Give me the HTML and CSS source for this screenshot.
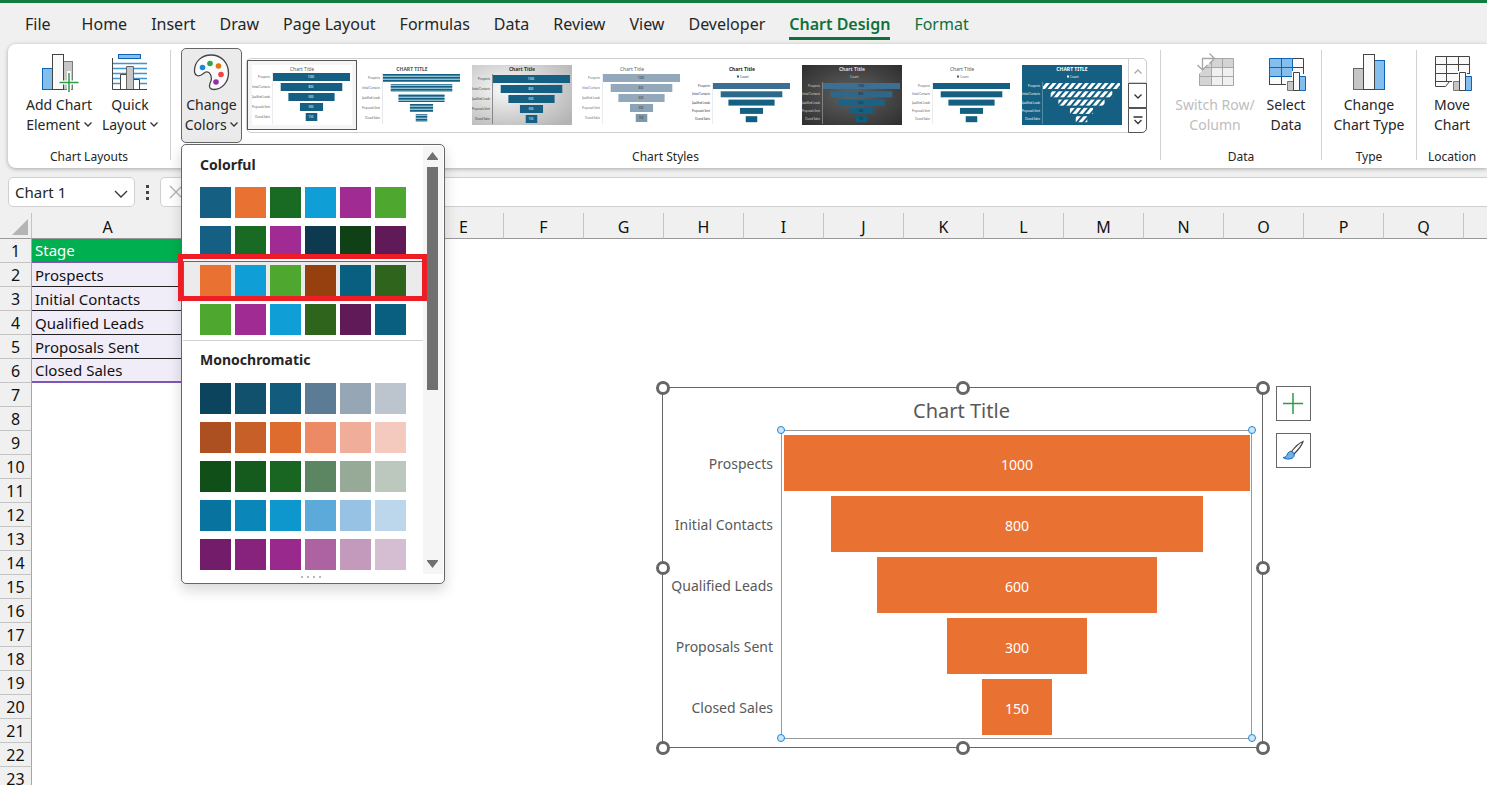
FILE: index.html
```html
<!DOCTYPE html>
<html lang="en">
<head>
    <meta charset="UTF-8">
    <meta name="viewport" content="width=device-width, initial-scale=1.0">
    <title>Funnel chart - Excel</title>
    <link rel="stylesheet" href="styles.css">
</head>
<body>
    <nav class="tabs">
        <a class="file" href="#">File</a>
        <a href="#">Home</a>
        <a href="#">Insert</a>
        <a href="#">Draw</a>
        <a href="#">Page Layout</a>
        <a href="#">Formulas</a>
        <a href="#">Data</a>
        <a href="#">Review</a>
        <a href="#">View</a>
        <a href="#">Developer</a>
        <a class="context active" href="#">Chart Design</a>
        <a class="context" href="#">Format</a>
    </nav>

    <div class="ribbon">
        <section class="group layouts">
            <div class="tools">
                <button class="tool wide">
                    <svg width="40" height="40" viewBox="0 0 40 40">
                        <rect x="24.5" y="8.5" width="9" height="28" fill="#c8c6c4" stroke="#7a7a7a"/>
                        <rect x="3.5" y="15.5" width="10" height="21" fill="#83beec" stroke="#0f63b4"/>
                        <rect x="13.5" y="1.5" width="11" height="35" fill="#fafafa" stroke="#444"/>
                        <path d="M30 18v20M20 29.500h20" stroke="#fff" stroke-width="4"/>
                        <path d="M30 20v19M20.500 29.500h19" stroke="#2a9d48" stroke-width="1.500"/>
                    </svg>
                    <span>Add Chart<br>Element <svg class="caret" width="8" height="5" viewBox="0 0 8 5"><path d="M.5.500 4 4 7.500.500"/></svg></span>
                </button>
                <button class="tool">
                    <svg width="40" height="40" viewBox="0 0 40 40">
                        <path d="M3 10.500h34M3 15.500h34M3 20.500h34M3 25.500h34M3 30.500h34" stroke="#3c95d4" stroke-width="1.500"/>
                        <rect x="8.500" y="1.500" width="22" height="4" fill="#83beec" stroke="#0f63b4"/>
                        <path d="M10.500 36V21.500h6V36M23.500 36V26.500h6V36" fill="#fff" stroke="#444"/>
                        <path d="M16.500 36V13.500h7V36" fill="#c8c6c4" stroke="#666"/>
                        <path d="M2.500 5v31.500H37" fill="none" stroke="#444"/>
                    </svg>
                    <span>Quick<br>Layout <svg class="caret" width="8" height="5" viewBox="0 0 8 5"><path d="M.5.500 4 4 7.500.500"/></svg></span>
                </button>
            </div>
            <h2>Chart Layouts</h2>
        </section>

        <section class="group styles">
            <div class="tools">
                <div class="colors">
                    <button class="tool pressed" aria-expanded="true">
                        <svg width="40" height="40" viewBox="0 0 40 40">
                            <path d="M2.500 17C3 8 10 2 19 2c10 0 17.500 7.500 17.500 18C36.500 29 30 36.500 22 36.500c-4 0-5.500-2.500-4-6 1.500-3 2-6 .5-9-2-3.500-5-3-7-1C9 22.500 7 23.500 5 22.500c-2-1-2.700-3-2.500-5.500z" fill="#fafafa" stroke="#444" stroke-width="1.300"/>
                            <circle cx="10.500" cy="14.500" r="2.800" fill="#1e88d8"/>
                            <circle cx="18" cy="10.500" r="2.800" fill="#2fa34a"/>
                            <circle cx="26.500" cy="13" r="2.800" fill="#e07612"/>
                            <circle cx="29" cy="21.500" r="2.800" fill="#ee4444"/>
                            <circle cx="24" cy="29" r="2.800" fill="#9331a4"/>
                        </svg>
                        <span>Change<br>Colors <svg class="caret" width="8" height="5" viewBox="0 0 8 5"><path d="M.5.500 4 4 7.500.500"/></svg></span>
                    </button>
                    <div class="menu">
                        <div class="menu-body">
                            <div class="palettes">
                                <h3>Colorful</h3>
                                <div id="colorful"></div>
                                <h3 class="mono">Monochromatic</h3>
                                <div id="monochromatic"></div>
                            </div>
                            <div class="scroll">
                                <svg width="11" height="8" viewBox="0 0 11 8"><path d="M5.500 0 11 7v1H0V7z"/></svg>
                                <div class="thumb"></div>
                                <svg class="down" width="11" height="8" viewBox="0 0 11 8"><path d="M5.500 8 11 1V0H0v1z"/></svg>
                            </div>
                        </div>
                        <div class="grip"><i></i><i></i><i></i><i></i></div>
                    </div>
                </div>
                <div class="gallery">
                    <div class="thumbs" id="thumbs"></div>
                    <div class="gallery-nav">
                        <button disabled aria-label="Previous styles"><svg width="8" height="5" viewBox="0 0 8 5"><path d="M.5 4.500 4 1l3.500 3.500"/></svg></button>
                        <button aria-label="Next styles"><svg width="8" height="5" viewBox="0 0 8 5"><path d="M.5.500 4 4 7.500.500"/></svg></button>
                        <button aria-label="More styles"><svg width="10" height="9" viewBox="0 0 10 9"><path d="M.5 1h9M1.500 4 5 7.500 8.500 4"/></svg></button>
                    </div>
                </div>
            </div>
            <h2>Chart Styles</h2>
        </section>

        <section class="group data">
            <div class="tools">
                <button class="tool wide" disabled>
                    <svg width="40" height="40" viewBox="0 0 40 40">
                        <path d="M4.500 5.500h34v27h-34z" fill="#f0f0f0"/>
                        <path d="M4.500 5.500h34v9h-34zM4.500 14.500h12v18h-12z" fill="#d4d4d4"/>
                        <path d="M4.500 5.500h34v27h-34zM4.500 14.500h34M4.500 23.500h34M16.500 5.500v27M27.500 5.500v27" fill="none" stroke="#a6a6a6"/>
                        <path d="M0 0h24L4 21H0z" fill="#fff"/>
                        <path d="M7.500 17V5.500H19M14.500.500l5 5-5 5M2.500 12l5 5 5-5" fill="none" stroke="#a6a6a6" stroke-width="1.300"/>
                    </svg>
                    <span>Switch Row/<br>Column</span>
                </button>
                <button class="tool">
                    <svg width="40" height="40" viewBox="0 0 40 40">
                        <path d="M3.500 5.500h34v26h-34z" fill="#fafafa"/>
                        <path d="M3.500 31.500h34v-26M15.500 23v8M3.500 23v9M26.500 5.500h11M26.500 14.500h11" fill="none" stroke="#444"/>
                        <path d="M3.500 5.500h23v18h-23zM15.500 5.500v18M3.500 14.500h23" fill="#83beec" stroke="#0f63b4"/>
                        <path d="M20 26h6v-8h9v3h5v19H20z" fill="#fff"/>
                        <path d="M21.500 28.500h6v9h-6z" fill="#c8c6c4" stroke="#777"/>
                        <path d="M33.500 23.500h6v14h-6z" fill="#83beec" stroke="#0f63b4"/>
                        <path d="M27.500 19.500h6v18h-6z" fill="#fafafa" stroke="#444"/>
                    </svg>
                    <span>Select<br>Data</span>
                </button>
            </div>
            <h2>Data</h2>
        </section>

        <section class="group type">
            <div class="tools">
                <button class="tool wide">
                    <svg width="40" height="40" viewBox="0 0 40 40">
                        <rect x="4.500" y="15.500" width="10" height="21" fill="#c8c6c4" stroke="#666"/>
                        <rect x="25.500" y="7.500" width="10" height="29" fill="#83beec" stroke="#0f63b4"/>
                        <rect x="14.500" y="1.500" width="11" height="35" fill="#fafafa" stroke="#444"/>
                    </svg>
                    <span>Change<br>Chart Type</span>
                </button>
            </div>
            <h2>Type</h2>
        </section>

        <section class="group location">
            <div class="tools">
                <button class="tool">
                    <svg width="40" height="40" viewBox="0 0 40 40">
                        <path d="M3.500 3.500h34v25H17.500l-4 5h-10z" fill="#fafafa" stroke="#444"/>
                        <path d="M3.500 11.500h34M3.500 20.500h34M3.500 28.500h15M14.500 3.500v25M26.500 3.500v25" fill="none" stroke="#444"/>
                        <path d="M20 27h6v-9h9v3h5v19H20z" fill="#fff"/>
                        <path d="M21.500 28.500h6v9h-6z" fill="#c8c6c4" stroke="#777"/>
                        <path d="M33.500 23.500h6v14h-6z" fill="#83beec" stroke="#0f63b4"/>
                        <path d="M27.500 19.500h6v18h-6z" fill="#fafafa" stroke="#444"/>
                    </svg>
                    <span>Move<br>Chart</span>
                </button>
            </div>
            <h2>Location</h2>
        </section>
    </div>

    <div class="formula-bar">
        <div class="name-box">
            <select aria-label="Name box"><option>Chart 1</option></select>
            <svg width="14" height="8" viewBox="0 0 14 8"><path d="M1 1l6 6 6-6"/></svg>
        </div>
        <div class="dots"><i></i><i></i><i></i></div>
        <div class="formula">
            <svg width="14" height="14" viewBox="0 0 14 14"><path d="M1 1l12 12M13 1 1 13"/></svg>
            <input type="text" aria-label="Formula">
        </div>
    </div>

    <main class="sheet">
        <table>
            <colgroup id="cols"></colgroup>
            <thead><tr id="letters"></tr></thead>
            <tbody id="rows"></tbody>
        </table>

        <div class="chart">
            <div class="chart-title">Chart Title</div>
            <div class="chart-body">
                <div class="labels">
                    <span>Prospects</span>
                    <span>Initial Contacts</span>
                    <span>Qualified Leads</span>
                    <span>Proposals Sent</span>
                    <span>Closed Sales</span>
                </div>
                <div class="plot">
                    <div id="bars"></div>
                    <i class="dot tl"></i><i class="dot tr"></i><i class="dot bl"></i><i class="dot br"></i>
                </div>
            </div>
            <i class="handle t l"></i><i class="handle t c"></i><i class="handle t r"></i>
            <i class="handle m l"></i><i class="handle m r"></i>
            <i class="handle b l"></i><i class="handle b c"></i><i class="handle b r"></i>
            <div class="side">
                <button aria-label="Chart elements">
                    <svg width="22" height="22" viewBox="0 0 22 22"><path d="M10 0v21M0 10.500h20" stroke="#2a9d48" stroke-width="1.500"/></svg>
                </button>
                <button aria-label="Chart styles">
                    <svg width="22" height="22" viewBox="0 0 22 22">
                        <path d="M8.500 11.500C12 7 16 3 20 1.500 19 5.500 15 10 11 14z" fill="#fafafa" stroke="#444" stroke-width="1.200"/>
                        <path d="M0 17.500c3 0 3.500-1.500 4.500-3.500 1.500-3 3.500-3.500 5.500-1.500 2 2 1.500 4-.5 5.500-3 1.500-6.500 1.500-9.500-.5z" fill="#6db1e8" stroke="#0f63b4"/>
                    </svg>
                </button>
            </div>
        </div>
    </main>

    <script src="script.js"></script>
</body>
</html>
```

FILE: styles.css
```css
* {
    box-sizing: border-box;
}

body {
    margin: 0;
    height: 100vh;
    display: flex;
    flex-direction: column;
    overflow: hidden;
    background: #f0f0f0;
    color: #262626;
    font-family: "Noto Sans", "Open Sans", sans-serif;
    border-top: 3px solid #107c41;
}

button, select, input {
    font: inherit;
    color: inherit;
}

h2, h3 {
    margin: 0;
}

/* tabs */
.tabs {
    display: flex;
    gap: 24px;
    height: 41px;
    padding-left: 25px;
    font-size: 16px;
    line-height: 22px;
    flex: none;
}

.tabs a {
    height: 37px;
    padding-top: 10px;
    color: #262626;
    text-decoration: none;
    white-space: nowrap;
}

.tabs .file {
    margin-right: 7px;
}

.tabs .context {
    color: #0f703b;
}

.tabs .active {
    font-weight: 600;
    border-bottom: 3px solid #0f703b;
}

/* ribbon */
.ribbon {
    display: flex;
    flex: none;
    height: 124px;
    margin-left: 8px;
    background: #fff;
    border-radius: 8px 0 0 8px;
    box-shadow: 0 1px 4px rgba(0, 0, 0, 0.3);
    position: relative;
    z-index: 5;
}

.group {
    display: flex;
    flex-direction: column;
    margin: 6px 0 8px;
    border-right: 1px solid #d2d2d2;
}

.group h2 {
    margin-top: 3px;
    font-size: 12px;
    line-height: 20px;
    font-weight: normal;
    text-align: center;
}

.tools {
    display: flex;
    justify-content: center;
    height: 94px;
    flex: none;
}

.layouts {
    width: 163px;
}

.styles {
    flex: 1;
}

.styles .tools {
    justify-content: flex-start;
    padding-left: 10px;
}

.data {
    width: 161px;
}

.data .tools {
    padding-left: 8px;
}

.type {
    width: 95px;
}

.location {
    width: 70px;
    border-right: 0;
}

.tool {
    display: flex;
    flex-direction: column;
    align-items: center;
    width: 60px;
    height: 95px;
    padding: 2px 0 0;
    border: 1px solid transparent;
    border-radius: 5px;
    background: none;
    font-size: 14px;
    line-height: 20px;
    white-space: nowrap;
}

.tool.wide {
    width: 82px;
}

.tool span {
    margin-top: 2px;
}

.tool:disabled {
    color: #bdbdbd;
}

.caret {
    vertical-align: 3px;
}

.caret path, .gallery-nav path, .name-box path, .formula path {
    fill: none;
    stroke: #333;
    stroke-width: 1.3;
}

.colors {
    position: relative;
    margin-top: -2px;
}

.pressed {
    width: 61px;
    padding-top: 4px;
    background: #ebebeb;
    border-color: #666;
}

/* color menu */
.menu {
    position: absolute;
    left: 0;
    top: 96px;
    width: 264px;
    padding: 1px 1px 0;
    background: #fff;
    border: 1px solid #666;
    border-radius: 5px;
    box-shadow: 0 6px 14px rgba(0, 0, 0, 0.16);
}

.menu-body {
    display: flex;
}

.palettes {
    flex: 1;
}

.menu h3 {
    padding-left: 17px;
    font-size: 14px;
    line-height: 37px;
}

.menu .mono {
    margin-top: 1px;
    border-top: 1px solid #d2d2d2;
    line-height: 38px;
}

.palette {
    position: relative;
    display: flex;
    gap: 4px;
    width: 100%;
    height: 39px;
    padding: 3px 16px;
    border: 1px solid transparent;
    background: none;
}

.palette i {
    width: 31px;
    height: 31px;
}

.palette.hover {
    background: #ebebeb;
    border-color: #666;
}

/* red callout around the chosen palette */
.palette.hover::after {
    content: "";
    position: absolute;
    inset: -8px -5px -2px -6px;
    border: 5px solid #ee1c25;
}

.scroll {
    display: flex;
    flex-direction: column;
    align-items: center;
    width: 22px;
    padding: 6px 1px 6px 0;
    background: #f5f5f5;
    fill: #707070;
}

.scroll .thumb {
    width: 11px;
    height: 223px;
    margin-top: 7px;
    background: #707070;
}

.scroll .down {
    margin-top: auto;
}

.grip {
    display: flex;
    justify-content: center;
    gap: 4px;
    height: 9px;
    padding: 2px 4px 0 0;
}

.grip i {
    width: 2px;
    height: 2px;
    background: #b4bccb;
}

/* chart style gallery */
.gallery {
    display: flex;
    height: 75px;
    margin: 8px 0 0 4px;
    border: 1px solid #cfcfcf;
    border-radius: 5px;
}

.thumbs {
    display: flex;
}

.thumbs button {
    width: 110px;
    height: 70px;
    margin-top: 1px;
    padding: 0 4px;
    border: 1px solid transparent;
    background: none;
    line-height: 0;
}

.thumbs .selected {
    border: 1px solid #555;
    background: #f5f5f5;
}

.gallery-nav {
    display: flex;
    flex-direction: column;
    width: 19px;
    margin: -1px -1px -1px 1px;
}

.gallery-nav button {
    flex: 1;
    padding: 0;
    border: 1px solid #555;
    background: #fff;
    line-height: 0;
}

.gallery-nav button:first-child {
    border-color: #cfcfcf;
    border-radius: 0 5px 0 0;
}

.gallery-nav button:last-child {
    border-radius: 0 0 5px 0;
}

.gallery-nav button:disabled path {
    stroke: #aaa;
}

/* formula bar */
.formula-bar {
    display: flex;
    flex: none;
    height: 45px;
    padding: 9px 0 6px 8px;
}

.name-box, .formula {
    background: #fff;
    border: 1px solid #cfcfcf;
    border-radius: 5px;
}

.name-box {
    position: relative;
    width: 127px;
}

.name-box select {
    width: 100%;
    height: 28px;
    padding: 0 6px;
    border: 0;
    background: none;
    appearance: none;
    font-size: 15px;
}

.name-box svg {
    position: absolute;
    right: 6px;
    top: 12px;
    pointer-events: none;
}

.dots {
    display: flex;
    flex-direction: column;
    justify-content: center;
    gap: 3px;
    width: 25px;
    align-items: center;
}

.dots i {
    width: 3px;
    height: 3px;
    background: #444;
}

.formula {
    display: flex;
    align-items: center;
    flex: 1;
    padding-left: 8px;
    border-right: 0;
    border-radius: 5px 0 0 5px;
}

.formula path {
    stroke: #b0b0b0;
}

.formula input {
    flex: 1;
    border: 0;
    outline: 0;
    background: none;
}

/* sheet */
.sheet {
    position: relative;
    flex: 1;
    overflow: hidden;
    background: #fff;
}

.sheet table {
    table-layout: fixed;
    width: 0;
    border-spacing: 0;
    font-size: 15px;
    line-height: 20px;
}

.sheet th {
    padding: 0;
    background: #f0f0f0;
    color: #111;
    font-size: 16px;
    font-weight: normal;
    border-right: 1px solid #a6a6a6;
    border-bottom: 1px solid #c4c4c4;
}

.sheet thead th {
    height: 26px;
    padding-top: 2px;
    border-right-color: #c4c4c4;
    border-bottom-color: #999;
}

.sheet tbody tr {
    height: 24px;
}

.sheet td {
    padding: 0 0 0 3px;
    white-space: nowrap;
}

.corner svg {
    display: block;
    margin-left: auto;
    margin-right: 3px;
    fill: #b4b4b4;
}

.sheet .head {
    background: #00b050;
    color: #fff;
    border-bottom: 2px solid #7f56b8;
}

.sheet .item {
    background: #f1edf8;
    color: #111;
    border-bottom: 1px solid #222;
}

.sheet .last {
    border-bottom: 2px solid #7f56b8;
}

/* chart */
.chart {
    position: absolute;
    left: 662px;
    top: 174px;
    width: 601px;
    height: 361px;
    padding: 8px 10px 8px 8px;
    background: #fff;
    border: 1px solid #666;
    color: #595959;
}

.chart-title {
    font-size: 20px;
    line-height: 30px;
    text-align: center;
    margin-bottom: 4px;
}

.chart-body {
    display: flex;
    height: 309px;
}

.labels {
    display: flex;
    flex-direction: column;
    gap: 5px;
    width: 110px;
    padding: 4px 8px 0 0;
    font-size: 14px;
    line-height: 60px;
    text-align: right;
    white-space: nowrap;
}

.labels span {
    height: 56px;
}

.plot {
    position: relative;
    flex: 1;
    padding: 4px 1px 0 2px;
    border: 1px solid #999;
}

#bars {
    display: flex;
    flex-direction: column;
    align-items: center;
    gap: 5px;
}

.bar {
    height: 56px;
    background: #e97132;
    color: #fff;
    font-size: 14px;
    line-height: 60px;
    text-align: center;
}

.handle {
    position: absolute;
    width: 14px;
    height: 14px;
    background: #fff;
    border: 3px solid #666;
    border-radius: 50%;
}

.handle.t { top: -7px; }
.handle.m { top: calc(50% - 7px); }
.handle.b { bottom: -8px; }
.handle.l { left: -7px; }
.handle.c { left: calc(50% - 7px); }
.handle.r { right: -8px; }

.dot {
    position: absolute;
    width: 8px;
    height: 8px;
    background: #cfe6fa;
    border: 1px solid #1e88d8;
    border-radius: 50%;
}

.dot.tl, .dot.tr { top: -5px; }
.dot.bl, .dot.br { bottom: -4px; }
.dot.tl, .dot.bl { left: -5px; }
.dot.tr, .dot.br { right: -5px; }

.side {
    position: absolute;
    left: calc(100% + 14px);
    top: -2px;
    display: flex;
    flex-direction: column;
    gap: 12px;
}

.side button {
    width: 35px;
    height: 35px;
    padding: 0;
    border: 1px solid #666;
    background: #fff;
    line-height: 0;
}
```

FILE: script.js
```js
// COLOR MENU
const colorful = [
    ["#156082", "#e97132", "#196b24", "#0f9ed5", "#a02b93", "#4ea72e"],
    ["#156082", "#196b24", "#a02b93", "#0d3a4e", "#0f4016", "#601a58"],
    ["#e97132", "#0f9ed5", "#4ea72e", "#964010", "#095f80", "#2f641c"],
    ["#4ea72e", "#a02b93", "#0f9ed5", "#2f641c", "#601a58", "#095f80"]
];
const monochromatic = [
    ["#0c445e", "#11516d", "#135b7c", "#5c7c96", "#96a6b5", "#bcc4ce"],
    ["#ac5022", "#c75f28", "#de6c2f", "#ec8a66", "#f0ad9a", "#f4c9be"],
    ["#104f17", "#155b1e", "#186622", "#5c8561", "#96aa97", "#bcc7be"],
    ["#07739e", "#0b86b8", "#0e97cd", "#5baada", "#97c2e4", "#bcd6ec"],
    ["#731d6a", "#87237c", "#99298d", "#ad62a1", "#c39abb", "#d5bed2"]
];

function fillPalettes(id, list, hover) {
    document.getElementById(id).innerHTML = list.map((colors, n) =>
        `<button class="palette${n === hover ? " hover" : ""}" aria-label="Palette ${n + 1}">` +
        colors.map(c => `<i style="background: ${c}"></i>`).join("") + "</button>"
    ).join("");
}
fillPalettes("colorful", colorful, 2);
fillPalettes("monochromatic", monochromatic, -1);

// GALLERY THUMBNAILS
const stages = ["Prospects", "Initial Contacts", "Qualified Leads", "Proposals Sent", "Closed Sales"];
const values = [1000, 800, 600, 300, 150];
const defs = `<defs>
    <pattern id="lines" width="4" height="3" patternUnits="userSpaceOnUse"><rect width="4" height="3" fill="#8fc0d4"/><rect width="4" height="1.600" fill="#156082"/></pattern>
    <pattern id="hatch" width="5" height="5" patternUnits="userSpaceOnUse" patternTransform="rotate(40)"><rect width="5" height="5" fill="#156082"/><rect width="3" height="5" fill="#fff"/></pattern>
    <radialGradient id="silver" cx=".35" cy=".4" r=".8"><stop offset="0" stop-color="#fafafa"/><stop offset="1" stop-color="#b4b4b4"/></radialGradient>
    <radialGradient id="coal" cx=".5" cy=".5" r=".7"><stop offset="0" stop-color="#626262"/><stop offset="1" stop-color="#2e2e2e"/></radialGradient>
</defs>`;
const styles = [
    { bg: "#fff", bar: ["#156082"], text: "#555", value: "#fff", title: "Chart Title" },
    { bg: "#fff", bar: ["url(#lines)"], text: "#555", title: "CHART TITLE", bold: true, y: 9, axis: "#ddd" },
    { bg: "url(#silver)", bar: ["#156082"], text: "#333", value: "#fff", title: "Chart Title", bold: true, y: 10, axis: "#666" },
    { bg: "#fff", bar: ["#93a9bb", "#93a9bb", "#93a9bb", "#8ba3b6", "#7d98ad"], text: "#666", value: "#333", title: "Chart Title", y: 9 },
    { bg: "#fff", bar: ["#3d6f93", "#2c6a8c", "#156082", "#156082", "#0c5f82"], text: "#223", title: "Chart Title", bold: true, legend: true },
    { bg: "url(#coal)", bar: ["#3d6f93", "#2f6788", "#1c6286", "#156082", "#0c5f82"], text: "#ddd", value: "#223", title: "Chart Title", bold: true, legend: true, axis: "#999" },
    { bg: "#fff", bar: ["#156082"], text: "#555", title: "Chart Title", legend: true },
    { bg: "#156082", bar: ["url(#hatch)"], text: "#fff", title: "CHART TITLE", bold: true, legend: true, axis: "#6f9db3" }
];

function drawThumb(s, n) {
    const top = s.legend ? 18 : (s.y || 8);
    const step = s.legend ? 8.3 : 10;
    const h = s.legend ? 6 : 8;
    let out = n === 0 ? defs : "";
    out += `<rect width="100" height="60" fill="${s.bg}"/>`;
    out += `<text x="50" y="6" font-size="5" text-anchor="middle" font-weight="${s.bold ? "bold" : "normal"}" fill="${s.text}">${s.title}</text>`;
    if (s.legend) {
        out += `<rect x="45" y="10.500" width="2" height="2" fill="${s.bar.length > 1 ? "#156082" : s.text}"/>`;
        out += `<text x="48" y="13" font-size="3" fill="${s.text}">Count</text>`;
    }
    out += `<path d="M20.500 ${top - 1}V59" stroke="${s.axis || "#e4e4e4"}" stroke-width=".7"/>`;
    values.forEach((v, i) => {
        const w = 77 * v / 1000;
        const y = top + i * step;
        out += `<text x="18" y="${y + h / 2 + 1}" font-size="2.600" text-anchor="end" fill="${s.text}">${stages[i]}</text>`;
        out += `<rect x="${59.5 - w / 2}" y="${y}" width="${w}" height="${h}" fill="${s.bar[i] || s.bar[0]}"/>`;
        if (s.value) {
            out += `<text x="59" y="${y + h / 2 + 1}" font-size="2.800" text-anchor="middle" fill="${s.value}">${v}</text>`;
        }
    });
    return `<button class="${n === 0 ? "selected" : ""}" aria-label="Style ${n + 1}"><svg width="100" height="60" viewBox="0 0 100 60">${out}</svg></button>`;
}
document.getElementById("thumbs").innerHTML = styles.map(drawThumb).join("");

// SHEET
const letters = "ABCDEFGHIJKLMNOPQ".split("").concat("");
document.getElementById("cols").innerHTML =
    '<col style="width: 32px"><col style="width: 152px">' + '<col style="width: 80px">'.repeat(letters.length - 1);
document.getElementById("letters").innerHTML =
    '<th class="corner"><svg width="16" height="16" viewBox="0 0 16 16"><path d="M16 0v16H0z"/></svg></th>' +
    letters.map(l => `<th>${l}</th>`).join("");

const cells = ["Stage"].concat(stages);
let rows = "";
for (let r = 1; r <= 23; r++) {
    const text = cells[r - 1] || "";
    const cls = r === 1 ? "head" : r < 6 ? "item" : r === 6 ? "item last" : "";
    rows += `<tr><th>${r}</th><td class="${cls}">${text}</td></tr>`;
}
document.getElementById("rows").innerHTML = rows;

// FUNNEL
document.getElementById("bars").innerHTML = values.map(v =>
    `<div class="bar" style="width: ${v / 10}%">${v}</div>`
).join("");
```
